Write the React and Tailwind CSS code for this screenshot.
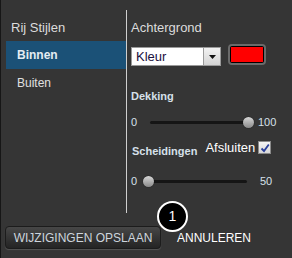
import React from 'react';

const Slider = ({ width, pos, max, gap }) => (
    <div className="flex items-center h-[14px] text-[11px] leading-[14px] text-[#d6e0ea]">
        <span className="w-[19px]">0</span>
        <div className="relative h-[3px] bg-[#151515] rounded-full" style={{ width }}>
            <div
                className="absolute top-[-4px] w-[11px] h-[11px] rounded-full bg-gradient-to-b from-[#d8d8d8] to-[#8a8a8a] shadow-[0_0_1px_#000]"
                style={{ left: pos }}
            />
        </div>
        <span style={{ marginLeft: gap }}>{max}</span>
    </div>
);

const App = () => {
    return (
        <div
            className="relative w-[292px] h-[258px] bg-[#353535] border-l border-[#161616] flex flex-col"
            style={{ fontFamily: '"Liberation Sans", Arial, sans-serif' }}
        >
            <div className="flex mt-[10px] h-[203px]">
                {/* menu links */}
                <div className="w-[125px] pt-[10px]">
                    <div className="pl-[10px] text-[13px] leading-[16px] text-[#dcdcdc]">Rij Stijlen</div>
                    <div className="mt-[5px] ml-[5px] h-[28px] flex items-center pl-[11px] bg-[#1b5177] text-[12px] leading-[16px] font-bold text-[#e4ecf2]">
                        Binnen
                    </div>
                    <div className="ml-[5px] h-[28px] flex items-center pl-[11px] text-[12px] leading-[16px] text-[#e0e0e0]">
                        Buiten
                    </div>
                </div>

                {/* instellingen */}
                <div className="border-l border-[#cfcfcf] pl-[4px] pt-[10px] flex-1">
                    <div className="text-[13px] leading-[16px] text-[#dcdcdc]">Achtergrond</div>
                    <div className="flex items-start mt-[8px] h-[21px]">
                        <div className="mt-[3px] w-[90px] h-[19px] bg-white border border-[#9a9a9a] flex">
                            <span className="flex-1 pl-[4px] text-[13px] leading-[17px] text-[#1a1040]">Kleur</span>
                            <div className="w-[17px] h-[17px] bg-gradient-to-b from-[#f2f2f2] to-[#d4d4d4] border-l border-[#9a9a9a] flex items-center justify-center">
                                <svg width="7" height="4" viewBox="0 0 7 4">
                                    <path d="M0 0h7L3.5 4z" fill="#111" />
                                </svg>
                            </div>
                        </div>
                        <div className="ml-[7px] w-[38px] h-[21px] rounded-[4px] border-2 border-[#6a6a6a] bg-black p-[1px]">
                            <div className="w-full h-full bg-[#ff0000]" />
                        </div>
                    </div>

                    <div className="mt-[24px] text-[11px] leading-[14px] font-bold text-[#d6e0ea]">Dekking</div>
                    <div className="mt-[12px]">
                        <Slider width={98} pos={93} max="100" gap={10} />
                    </div>

                    <div className="flex items-start mt-[11px] h-[16px]">
                        <span className="mt-[4px] pl-[1px] text-[11px] leading-[14px] font-bold text-[#d6e0ea]">Scheidingen</span>
                        <span className="ml-[8px] text-[13px] leading-[16px] text-white">Afsluiten</span>
                        <div className="ml-[3px] mt-[1px] w-[13px] h-[13px] border border-[#8a8a8a] bg-gradient-to-b from-[#f4f4f4] to-[#d8d8d8] flex items-center justify-center">
                            <svg width="10" height="10" viewBox="0 0 10 10">
                                <path d="M1.5 5.5 L4 8 L8.8 1.5" stroke="#2a3f9a" strokeWidth="1.8" fill="none" />
                            </svg>
                        </div>
                    </div>
                    <div className="mt-[18px]">
                        <Slider width={97} pos={-7} max="50" gap={13} />
                    </div>
                </div>
            </div>

            <div className="flex items-center mt-[13px] ml-[4px]">
                <button className="w-[156px] h-[23px] rounded-[4px] border border-[#1c1c1c] bg-gradient-to-b from-[#474747] to-[#242424] shadow-[0_1px_1px_#555] text-[12px] leading-[14px] text-[#cdd5dd]">
                    WIJZIGINGEN OPSLAAN
                </button>
                <span className="ml-[16px] text-[12px] leading-[14px] text-white">ANNULEREN</span>
            </div>

            <div className="absolute left-[156px] top-[201px] w-[31px] h-[31px] rounded-full bg-black border-2 border-white flex items-center justify-center text-[14px] text-white">
                1
            </div>
        </div>
    );
};

export default App;
